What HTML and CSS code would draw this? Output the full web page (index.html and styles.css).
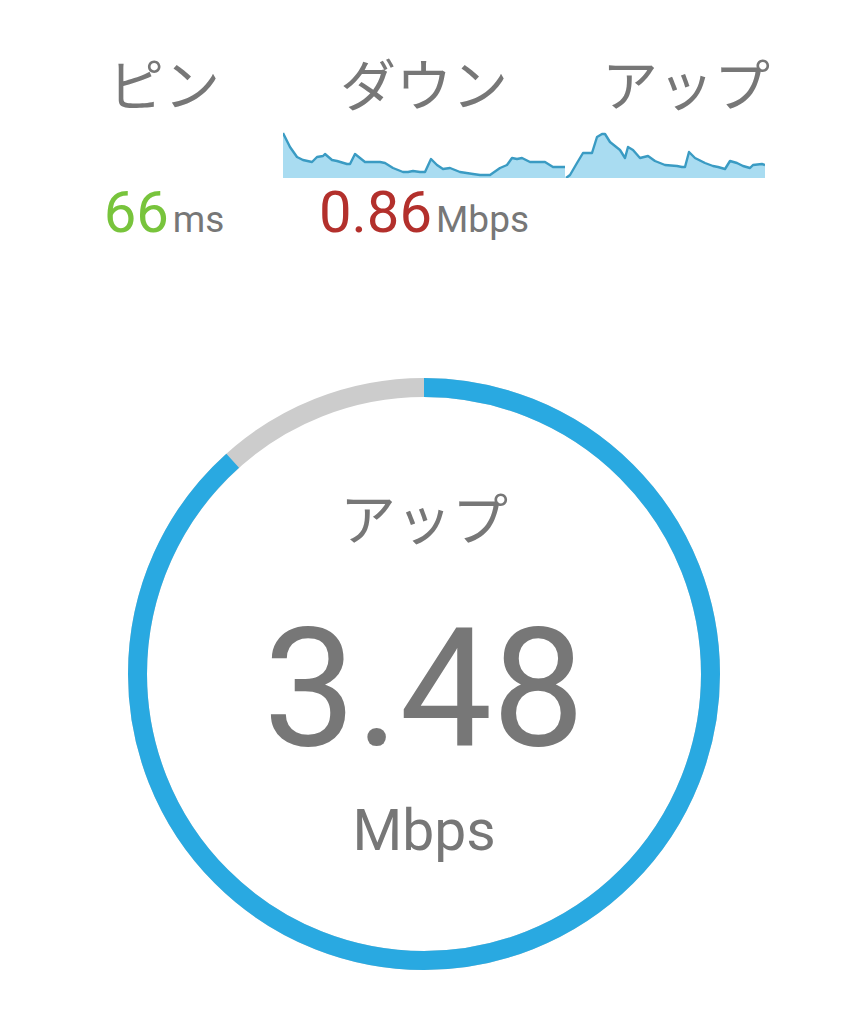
FILE: index.html
```html
<!DOCTYPE html>
<html lang="ja">
<head>
  <meta charset="UTF-8">
  <title>スピードテスト</title>
  <link rel="stylesheet" href="styles.css">
</head>
<body>
  <div class="screen">
    <div class="stats">
      <div class="label">ピン</div>
      <div class="label">ダウン</div>
      <div class="label">アップ</div>

      <svg class="spark" width="482" height="50" viewBox="283 128 482 50">
        <polygon class="spark-fill" points="283,178 283,133 290,147 297,157 303,160 312,162 317,157 323,156 325,154 332,160 337,161 347,164 350,164 355,154 360,158 365,162 380,162 385,163 393,168 403,172 408,172 413,171 420,172 425,172 431,159 437,165 443,169 450,168 460,172 473,174 480,175 490,175 500,168 507,165 512,158 517,159 522,158 530,162 537,162 545,162 553,167 565,167 565,178" />
        <polyline class="spark-line" points="283,133 290,147 297,157 303,160 312,162 317,157 323,156 325,154 332,160 337,161 347,164 350,164 355,154 360,158 365,162 380,162 385,163 393,168 403,172 408,172 413,171 420,172 425,172 431,159 437,165 443,169 450,168 460,172 473,174 480,175 490,175 500,168 507,165 512,158 517,159 522,158 530,162 537,162 545,162 553,167 565,167" />
        <polygon class="spark-fill" points="566,178 570,175 577,163 583,153 592,153 597,137 602,134 605,134 610,142 615,146 620,150 625,158 628,147 633,150 640,158 648,156 655,161 665,165 677,166 682,167 685,167 689,152 695,158 705,163 713,166 718,167 725,169 730,161 737,163 743,166 750,168 753,165 762,164 765,165 765,178" />
        <polyline class="spark-line" points="566,178 570,175 577,163 583,153 592,153 597,137 602,134 605,134 610,142 615,146 620,150 625,158 628,147 633,150 640,158 648,156 655,161 665,165 677,166 682,167 685,167 689,152 695,158 705,163 713,166 718,167 725,169 730,161 737,163 743,166 750,168 753,165 762,164 765,165" />
      </svg>

      <div class="value"><span class="num ping">66</span><span class="unit">ms</span></div>
      <div class="value"><span class="num down">0.86</span><span class="unit">Mbps</span></div>
    </div>

    <div class="gauge">
      <svg class="ring" width="592" height="592" viewBox="0 0 592 592">
        <circle class="ring-track" cx="296" cy="296" r="286.5" />
        <circle class="ring-progress" cx="296" cy="296" r="286.5" stroke-dasharray="1590 1800" transform="rotate(-90 296 296)" />
      </svg>
      <div class="gauge-text">
        <div class="gauge-label">アップ</div>
        <div class="gauge-value">3.48</div>
        <div class="gauge-unit">Mbps</div>
      </div>
    </div>
  </div>
</body>
</html>
```

FILE: styles.css
```css
body {
  margin: 0;
  background: #fff;
  font-family: Roboto, "Noto Sans CJK JP", sans-serif;
  color: #777;
}
.screen {
  width: 849px;
  height: 1024px;
  overflow: hidden;
}
.stats {
  display: grid;
  grid-template-columns: 238px 282px 242px;
  margin-left: 45px;
  padding-top: 54px;
}
.label {
  font-family: "Noto Sans CJK JP", sans-serif;
  font-size: 56px;
  line-height: 1;
  text-align: center;
  color: #777;
}
.spark {
  display: block;
  grid-column: 2 / 4;
  margin-top: 18px;
}
.spark-fill {
  fill: #a9dcf1;
}
.spark-line {
  fill: none;
  stroke: #3a9bc3;
  stroke-width: 2.4;
  stroke-linejoin: round;
}
.value {
  margin-top: 5px;
  text-align: center;
  line-height: 1;
  white-space: nowrap;
}
.value:first-of-type {
  grid-column: 1;
}
.num {
  font-size: 58px;
}
.num.ping {
  color: #78c43c;
}
.num.down {
  color: #b3302c;
}
.unit {
  margin-left: 4px;
  font-size: 37px;
  color: #777;
}
.gauge {
  display: grid;
  width: 592px;
  height: 592px;
  margin: 137px 0 0 128px;
}
.ring, .gauge-text {
  grid-area: 1 / 1;
}
.ring-track {
  fill: none;
  stroke: #cccccc;
  stroke-width: 19;
}
.ring-progress {
  fill: none;
  stroke: #29a9e1;
  stroke-width: 19;
}
.gauge-text {
  display: flex;
  flex-direction: column;
  align-items: center;
  padding-top: 110px;
  line-height: 1;
}
.gauge-label {
  font-family: "Noto Sans CJK JP", sans-serif;
  font-size: 56px;
  color: #777;
}
.gauge-value {
  margin-top: 62px;
  font-size: 165px;
  color: #777;
}
.gauge-unit {
  margin-top: 31px;
  font-size: 57px;
  color: #777;
}
```
